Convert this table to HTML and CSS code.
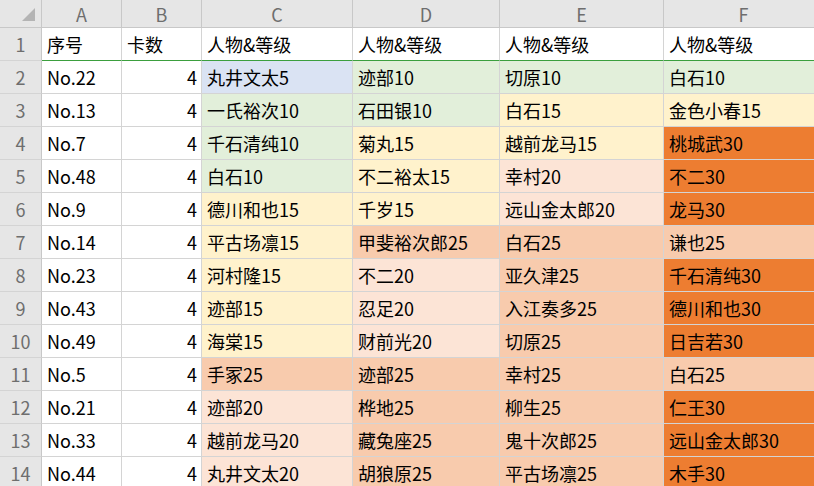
FILE: index.html
```html
<!DOCTYPE html>
<html lang="zh-CN">
<head>
<meta charset="utf-8">
<title>Sheet</title>
<link rel="stylesheet" href="styles.css">
</head>
<body>
<div class="sheet">
  <div class="corner"><span class="tri"></span></div>
  <div class="ch">A</div><div class="ch">B</div><div class="ch">C</div><div class="ch">D</div><div class="ch">E</div><div class="ch">F</div>

  <div class="rh">1</div>
  <div class="c hdr">序号</div><div class="c hdr">卡数</div><div class="c hdr">人物&amp;等级</div><div class="c hdr">人物&amp;等级</div><div class="c hdr">人物&amp;等级</div><div class="c hdr">人物&amp;等级</div>

  <div class="rh">2</div>
  <div class="c">No.22</div><div class="c num">4</div><div class="c blue">丸井文太5</div><div class="c green">迹部10</div><div class="c green">切原10</div><div class="c green">白石10</div>

  <div class="rh">3</div>
  <div class="c">No.13</div><div class="c num">4</div><div class="c green">一氏裕次10</div><div class="c green">石田银10</div><div class="c yellow">白石15</div><div class="c yellow">金色小春15</div>

  <div class="rh">4</div>
  <div class="c">No.7</div><div class="c num">4</div><div class="c green">千石清纯10</div><div class="c yellow">菊丸15</div><div class="c yellow">越前龙马15</div><div class="c orange">桃城武30</div>

  <div class="rh">5</div>
  <div class="c">No.48</div><div class="c num">4</div><div class="c green">白石10</div><div class="c yellow">不二裕太15</div><div class="c lpeach">幸村20</div><div class="c orange">不二30</div>

  <div class="rh">6</div>
  <div class="c">No.9</div><div class="c num">4</div><div class="c yellow">德川和也15</div><div class="c yellow">千岁15</div><div class="c lpeach">远山金太郎20</div><div class="c orange">龙马30</div>

  <div class="rh">7</div>
  <div class="c">No.14</div><div class="c num">4</div><div class="c yellow">平古场凛15</div><div class="c peach">甲斐裕次郎25</div><div class="c peach">白石25</div><div class="c peach">谦也25</div>

  <div class="rh">8</div>
  <div class="c">No.23</div><div class="c num">4</div><div class="c yellow">河村隆15</div><div class="c lpeach">不二20</div><div class="c peach">亚久津25</div><div class="c orange">千石清纯30</div>

  <div class="rh">9</div>
  <div class="c">No.43</div><div class="c num">4</div><div class="c yellow">迹部15</div><div class="c lpeach">忍足20</div><div class="c peach">入江奏多25</div><div class="c orange">德川和也30</div>

  <div class="rh">10</div>
  <div class="c">No.49</div><div class="c num">4</div><div class="c yellow">海棠15</div><div class="c lpeach">财前光20</div><div class="c peach">切原25</div><div class="c orange">日吉若30</div>

  <div class="rh">11</div>
  <div class="c">No.5</div><div class="c num">4</div><div class="c peach">手冢25</div><div class="c peach">迹部25</div><div class="c peach">幸村25</div><div class="c peach">白石25</div>

  <div class="rh">12</div>
  <div class="c">No.21</div><div class="c num">4</div><div class="c lpeach">迹部20</div><div class="c peach">桦地25</div><div class="c peach">柳生25</div><div class="c orange">仁王30</div>

  <div class="rh">13</div>
  <div class="c">No.33</div><div class="c num">4</div><div class="c lpeach">越前龙马20</div><div class="c peach">藏兔座25</div><div class="c peach">鬼十次郎25</div><div class="c orange">远山金太郎30</div>

  <div class="rh">14</div>
  <div class="c">No.44</div><div class="c num">4</div><div class="c lpeach">丸井文太20</div><div class="c peach">胡狼原25</div><div class="c peach">平古场凛25</div><div class="c orange">木手30</div>
</div>
</body>
</html>
```
FILE: styles.css
```css
html, body {
  margin: 0;
  padding: 0;
  background: #ffffff;
  overflow: hidden;
}

.sheet {
  display: grid;
  grid-template-columns: 42px 80px 80px 151px 147px 164px 160px;
  grid-template-rows: 28px;
  grid-auto-rows: 33px;
  font-family: "Noto Sans CJK SC", "Noto Sans", sans-serif;
  font-size: 18px;
  color: #000000;
}

.sheet > div {
  box-sizing: border-box;
  border-right: 1px solid #d4d4d4;
  border-bottom: 1px solid #d4d4d4;
  display: flex;
  align-items: center;
  white-space: nowrap;
  overflow: hidden;
}

.corner {
  background: #e6e6e6;
  justify-content: flex-end;
  align-items: flex-end !important;
  padding: 0 6px 6px 0;
  border-right-color: #c8c8c8 !important;
  border-bottom-color: #c8c8c8 !important;
}

.tri {
  width: 0;
  height: 0;
  border-left: 13px solid transparent;
  border-bottom: 13px solid #b4b4b4;
}

.ch {
  background: #e6e6e6;
  color: #6e6e6e;
  justify-content: center;
  border-right-color: #c8c8c8 !important;
  border-bottom-color: #c8c8c8 !important;
}

.rh {
  background: #e6e6e6;
  color: #6e6e6e;
  justify-content: center;
  border-right-color: #c8c8c8 !important;
}

.c {
  padding: 0 4px 0 5px;
  background: #ffffff;
}

.hdr {
  border-bottom: 1px solid #3b9f3e !important;
}

.num {
  justify-content: flex-end;
}

.blue { background: #dae3f3; }
.green { background: #e2efda; }
.yellow { background: #fff2cc; }
.lpeach { background: #fce4d6; }
.peach { background: #f8cbad; }
.orange { background: #ed7d31; }
```
